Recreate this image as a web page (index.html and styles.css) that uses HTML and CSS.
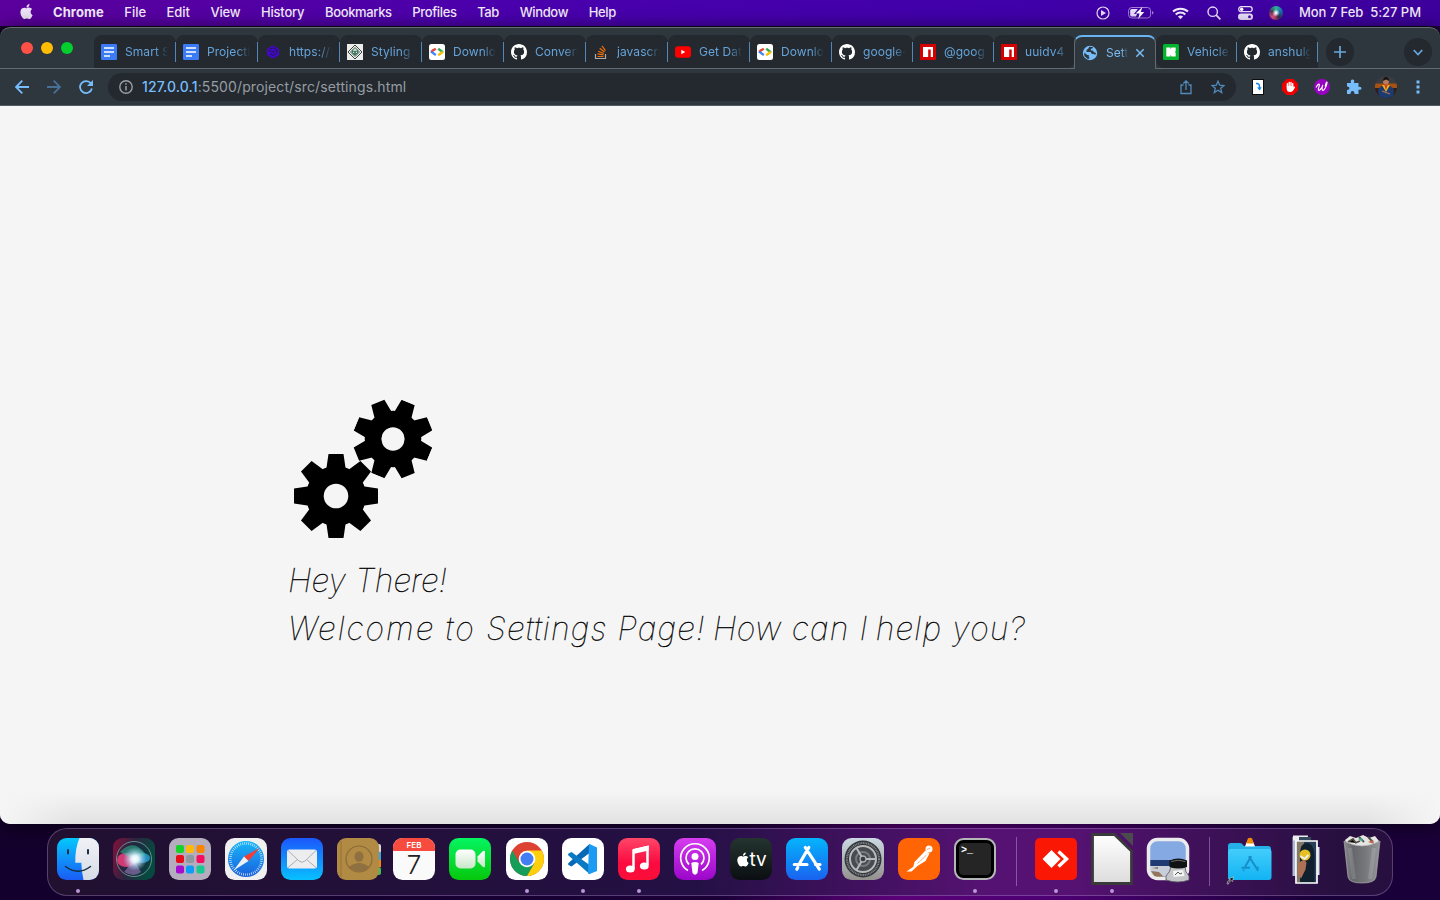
FILE: index.html
```html
<!DOCTYPE html>
<html lang="en">
<head>
<meta charset="utf-8">
<title>Settings</title>
<link rel="stylesheet" href="styles.css">
</head>
<body>
<svg class="defs" width="0" height="0">
  <defs>
    <linearGradient id="gFinder" x1="0" y1="0" x2="0" y2="1"><stop offset="0" stop-color="#04c8fd"/><stop offset="1" stop-color="#1a5cf5"/></linearGradient>
    <linearGradient id="gLight" x1="0" y1="0" x2="0" y2="1"><stop offset="0" stop-color="#f2f2f5"/><stop offset="1" stop-color="#d5dbe6"/></linearGradient>
    <linearGradient id="gMail" x1="0" y1="0" x2="0" y2="1"><stop offset="0" stop-color="#1b57fb"/><stop offset="1" stop-color="#08c0ff"/></linearGradient>
    <linearGradient id="gSafari" x1="0" y1="0" x2="0" y2="1"><stop offset="0" stop-color="#19b7f8"/><stop offset="1" stop-color="#1a5fdd"/></linearGradient>
    <linearGradient id="gWhite" x1="0" y1="0" x2="0" y2="1"><stop offset="0" stop-color="#fff"/><stop offset="1" stop-color="#c9e6c9"/></linearGradient>
    <linearGradient id="gFace" x1="0" y1="0" x2="0" y2="1"><stop offset="0" stop-color="#05f562"/><stop offset="1" stop-color="#06c70c"/></linearGradient>
    <linearGradient id="gMusic" x1="0" y1="0" x2="0" y2="1"><stop offset="0" stop-color="#ff4668"/><stop offset=".6" stop-color="#fb0a40"/><stop offset="1" stop-color="#fa0f38"/></linearGradient>
    <linearGradient id="gPod" x1="0" y1="0" x2="0" y2="1"><stop offset="0" stop-color="#d63df0"/><stop offset="1" stop-color="#9b06c9"/></linearGradient>
    <linearGradient id="gStore" x1="0" y1="0" x2="0" y2="1"><stop offset="0" stop-color="#04b4fc"/><stop offset="1" stop-color="#1a62ef"/></linearGradient>
    <linearGradient id="gPrefs" x1="0" y1="0" x2="0" y2="1"><stop offset="0" stop-color="#cbd9e2"/><stop offset="1" stop-color="#94918f"/></linearGradient>
    <linearGradient id="gPaper" x1="0" y1="0" x2="0" y2="1"><stop offset="0" stop-color="#fff"/><stop offset="1" stop-color="#dcdcdc"/></linearGradient>
    <linearGradient id="gCan" x1="0" y1="0" x2="1" y2="0"><stop offset="0" stop-color="#8b8b8f"/><stop offset=".25" stop-color="#66676b"/><stop offset=".6" stop-color="#77787c"/><stop offset="1" stop-color="#96979b"/></linearGradient>
    <linearGradient id="gFolder" x1="0" y1="0" x2="0" y2="1"><stop offset="0" stop-color="#43cdfb"/><stop offset="1" stop-color="#12b3f3"/></linearGradient>
    <linearGradient id="gSiri" x1="0" y1="0" x2="1" y2=".3"><stop offset="0" stop-color="#86103c"/><stop offset=".5" stop-color="#2c2440"/><stop offset="1" stop-color="#064a3f"/></linearGradient>
    <radialGradient id="gGlow"><stop offset="0" stop-color="#fff"/><stop offset=".3" stop-color="#e8f8ff" stop-opacity=".95"/><stop offset="1" stop-color="#9cf" stop-opacity="0"/></radialGradient>
    <clipPath id="tile"><rect width="42" height="42" rx="9.5"/></clipPath>
  </defs>
  <symbol id="apple" viewBox="0 0 24 24"><path d="M12.152 6.896c-.948 0-2.415-1.078-3.96-1.04-2.04.027-3.91 1.183-4.961 3.014-2.117 3.675-.546 9.103 1.519 12.09 1.013 1.454 2.208 3.09 3.792 3.039 1.52-.065 2.09-.987 3.935-.987 1.831 0 2.35.987 3.96.948 1.637-.026 2.676-1.48 3.676-2.948 1.156-1.688 1.636-3.325 1.662-3.415-.039-.013-3.182-1.221-3.22-4.857-.026-3.04 2.48-4.494 2.597-4.559-1.429-2.09-3.623-2.324-4.39-2.376-2-.156-3.675 1.09-4.61 1.09zM15.53 3.83c.843-1.012 1.4-2.427 1.245-3.83-1.207.052-2.662.805-3.532 1.818-.78.896-1.454 2.338-1.273 3.714 1.338.104 2.715-.688 3.559-1.701"/></symbol>
  <symbol id="docs" viewBox="0 0 16 16"><rect width="16" height="16" rx="1.3" fill="#3b7cf6"/><path d="M3 4h10M3 8h10M3 12h6" stroke="#fff" stroke-width="1.7"/></symbol>
  <symbol id="github" viewBox="0 0 16 16"><path fill="#fff" d="M8 0C3.58 0 0 3.58 0 8c0 3.54 2.29 6.53 5.47 7.59.4.07.55-.17.55-.38 0-.19-.01-.82-.01-1.49-2.01.37-2.53-.49-2.69-.94-.09-.23-.48-.94-.82-1.13-.28-.15-.68-.52-.01-.53.63-.01 1.08.58 1.23.82.72 1.21 1.87.87 2.33.66.07-.52.28-.87.51-1.07-1.78-.2-3.64-.89-3.64-3.95 0-.87.31-1.59.82-2.15-.08-.2-.36-1.02.08-2.12 0 0 .67-.21 2.2.82.64-.18 1.32-.27 2-.27s1.36.09 2 .27c1.53-1.04 2.2-.82 2.2-.82.44 1.1.16 1.92.08 2.12.51.56.82 1.27.82 2.15 0 3.07-1.87 3.75-3.65 3.95.29.25.54.73.54 1.48 0 1.07-.01 1.93-.01 2.2 0 .21.15.46.55.38A8.01 8.01 0 0 0 16 8c0-4.42-3.58-8-8-8z"/></symbol>
  <symbol id="gdev" viewBox="0 0 16 16"><rect width="16" height="16" rx="2.5" fill="#fff"/><g fill="none" stroke-width="2.3"><path d="M6.8 4.7 4.2 6.2" stroke="#ea4335"/><path d="M2 8 4.6 6" stroke="#ea4335"/><path d="M2 7.6 6.8 11" stroke="#4285f4"/><path d="M9.2 4.7 14 8.2" stroke="#34a853"/><path d="M14 7.8 9.2 11.2" stroke="#fbbc04"/></g></symbol>
  <symbol id="npm" viewBox="0 0 16 16"><rect width="16" height="16" fill="#d50000"/><path d="M3 3h10v10h-2.3V5.6H8.2V13H3z" fill="#fff"/></symbol>
  <symbol id="store" viewBox="0 0 42 42"><g fill="none" stroke="#fff" stroke-width="3.2" stroke-linecap="round"><path d="M22.8 9.5 13.7 25.3M19.3 9.5 33.3 31.2M8.3 26.5H21M29.5 26.5H34M11.8 29.4 10.8 31.2"/></g></symbol>
  <symbol id="gear" viewBox="-42 -42 84 84"><path fill-rule="evenodd" d="M-30 0a30 30 0 1 0 60 0a30 30 0 1 0-60 0zM-12.300 0a12.300 12.300 0 1 1 24.600 0a12.300 12.300 0 1 1-24.600 0z"/><path id="teeth" d="M-7.500-42h15L9.700-27H-9.700zM-7.500 42h15L9.700 27H-9.700zM-42-7.500v15L-27 9.700V-9.700zM42-7.500v15L27 9.700V-9.700z"/><use href="#teeth" transform="rotate(45)"/></symbol>
</svg>

<header class="menubar">
  <svg class="apple-logo"><use href="#apple"/></svg>
  <nav class="menus"><b>Chrome</b><span>File</span><span>Edit</span><span>View</span><span>History</span><span>Bookmarks</span><span>Profiles</span><span>Tab</span><span>Window</span><span>Help</span></nav>
  <div class="status">
    <svg width="14" height="14" viewBox="0 0 14 14"><circle cx="7" cy="7" r="6" fill="none" stroke="#e9defa" stroke-width="1.2"/><path d="M5 4v6l5-3z" fill="#e9defa"/></svg>
    <svg class="battery" width="26" height="14" viewBox="0 0 26 14"><rect x=".6" y="1.5" width="22" height="10.5" rx="3.2" fill="none" stroke="#a77fd8"/><path d="M24 5v3.5q1.5-.4 1.5-1.7T24 5" fill="#a77fd8"/><path d="M3.800 3h6L6 8h3l-1 2.500H3.800q-1.600 0-1.600-1.500V4.500q0-1.500 1.600-1.500z" fill="#e9defa"/><path d="m14.500 1-7 6.500h4l-1.300 5.500 6-7h-3.500z" fill="#fff"/></svg>
    <svg class="wifi" width="17" height="13" viewBox="0 0 17 13"><g fill="none" stroke="#f3ecfc" stroke-width="2"><path d="M1 4.600a11 11 0 0 1 15 0M3.700 7.500a7 7 0 0 1 9.600 0"/></g><path d="M5.900 9.600a4 4 0 0 1 5.200 0L8.500 12.300z" fill="#f3ecfc"/></svg>
    <svg class="search" width="14" height="14" viewBox="0 0 14 14"><g fill="none" stroke="#e9defa" stroke-width="1.400"><circle cx="5.700" cy="5.700" r="4.700"/><path d="m9.200 9.200 4.200 4.200" stroke-width="1.800"/></g></svg>
    <svg class="control" width="15" height="14" viewBox="0 0 15 14"><rect x=".7" y=".7" width="13.500" height="5" rx="2.500" fill="none" stroke="#e9defa" stroke-width="1.300"/><circle cx="3.700" cy="3.200" r="1.700" fill="#fff"/><rect y="7.500" width="15" height="6.500" rx="3.200" fill="#e9defa"/><circle cx="11.500" cy="10.700" r="1.500" fill="#4a10a8"/></svg>
    <i class="siri-mini"></i>
    <span class="clock">Mon 7 Feb&nbsp; 5:27 PM</span>
  </div>
</header>

<section class="window">
  <div class="tabstrip">
    <div class="lights"><i class="red"></i><i class="yellow"></i><i class="green"></i></div>
    <div class="tabs">
      <div class="tab"><svg><use href="#docs"/></svg><span>Smart S</span></div>
      <div class="tab"><svg><use href="#docs"/></svg><span>ProjectI</span></div>
      <div class="tab"><svg viewBox="0 0 16 16"><path d="m8 1.500 6 3.300v6.400l-6 3.300-6-3.300V4.800z" fill="#4108c8"/><path d="M4.200 7.500V5.800L8 3.700l3.800 2.100v3L8 11.500 5 9.700M6 7l2 1.200L10 7" fill="none" stroke="#1f1b3c"/></svg><span>https://l</span></div>
      <div class="tab"><svg viewBox="0 0 16 16"><rect width="16" height="16" fill="#ececec"/><path d="m8 1 7 7-7 7-7-7z" fill="#e9ece9" stroke="#3c4443"/><path d="m8 3.500 4.500 4.500L8 12.500 3.500 8z" fill="#c4d3ca" stroke="#26483c" stroke-width=".8"/><path d="M5 5.500 6.700 7h2.600L11 5.500V9l-3 2.500L5 9z" fill="#3d745b"/><path d="M6 8.300h1.200M8.800 8.300H10" stroke="#fff"/></svg><span>Styling</span></div>
      <div class="tab"><svg><use href="#gdev"/></svg><span>Downlo</span></div>
      <div class="tab"><svg><use href="#github"/></svg><span>Convert</span></div>
      <div class="tab"><svg viewBox="0 0 16 16"><path d="M2.500 10v4.500h10V10" fill="none" stroke="#a9adb0" stroke-width="1.200"/><path d="M4.500 12.500h6M4.600 9.900l6 1M5.200 7.200l5.600 2.300M6.700 4.300l4.800 3.700M9 1.800l3.400 4.800" stroke="#f0700a" stroke-width="1.200"/></svg><span>javascri</span></div>
      <div class="tab"><svg viewBox="0 0 16 16"><rect y="2.300" width="16" height="11.400" rx="3" fill="#f00"/><path d="M6.300 5.700v4.600l4-2.300z" fill="#fff"/></svg><span>Get Dat</span></div>
      <div class="tab"><svg><use href="#gdev"/></svg><span>Downlo</span></div>
      <div class="tab narrow"><svg><use href="#github"/></svg><span>google-</span></div>
      <div class="tab narrow"><svg><use href="#npm"/></svg><span>@goog</span></div>
      <div class="tab narrow before"><svg><use href="#npm"/></svg><span>uuidv4</span></div>
      <div class="tab narrow active"><svg viewBox="0 0 16 16"><circle cx="8" cy="8" r="7.200" fill="#77bdfb"/><path d="M2.300 7.500 5.200 10h1.600v1.800l1 1.400-2 .8-3.500-3zM7.200 1.800l-.8 1.700L4.500 5v2h4.200l1.200 2h2l1.200 1 1-2-2.500-1L11 5.500H8.700L9 3.800l1.800-.6V2z" fill="#2f373e"/></svg><span>Sett</span><svg class="close" viewBox="0 0 10 10"><path d="m1.300 1.300 7.400 7.400m0-7.400-7.400 7.400"/></svg></div>
      <div class="tab narrow after"><svg viewBox="0 0 16 16"><rect width="16" height="16" rx="1.500" fill="#03b52c"/><path d="M3.300 3.500h4.200v2l1-2h4.200v3.700l-1 .8 1 .8v3.700H8.500l-1-2v2H3.300z" fill="#fff"/></svg><span>Vehicle</span></div>
      <div class="tab narrow"><svg><use href="#github"/></svg><span>anshulg</span></div>
    </div>
    <button class="round plus"><svg width="12" height="12" viewBox="0 0 12 12"><path d="M6 0v12M0 6h12"/></svg></button>
    <button class="round chevron"><svg width="10" height="7" viewBox="0 0 10 7"><path d="m.7 1 4.300 4.500L9.300 1"/></svg></button>
  </div>
  <div class="toolbar">
    <svg class="nav" viewBox="0 0 14 14"><path d="M14 7H1.500M7.300.7 1 7l6.300 6.300"/></svg>
    <svg class="nav dim" viewBox="0 0 14 14"><path d="M0 7h12.500M6.700.7 13 7l-6.300 6.300"/></svg>
    <svg class="nav" viewBox="0 0 14 14"><path d="M12 3.600A6 6 0 1 0 12.900 8.500"/><path d="M14 0v6H8z" class="solid"/></svg>
    <div class="address">
      <svg width="14" height="14" viewBox="0 0 14 14"><circle cx="7" cy="7" r="6.200" fill="none" stroke="#9aa0a4" stroke-width="1.400"/><path d="M7 3.200v1.600M7 6v4.600" stroke="#9aa0a4" stroke-width="1.500"/></svg>
      <span class="url"><b>127.0.0.1</b>:5500/project/src/settings.html</span>
      <svg class="share" width="12" height="15" viewBox="0 0 12 15"><path d="M3.500 5H1v8.500h10V5H8.500M6 10V1M3.300 3.500 6 .9l2.700 2.600"/></svg>
      <svg class="star" width="14" height="14" viewBox="0 0 14 14"><path d="m7 1.200 1.700 4 4.300.3-3.300 2.800 1 4.200L7 10.200l-3.700 2.300 1-4.200L1 5.500l4.300-.3z"/></svg>
    </div>
    <div class="extensions">
      <svg viewBox="0 0 18 18"><rect x="3.500" y="1.500" width="11" height="15" fill="#fff" stroke="#0b0d0f"/><path d="M7 5.500q4-.5 3.500 4.500" fill="none" stroke="#1683e5" stroke-width="1.600"/><path d="m8 9.500 2.700 3 2-3.300z" fill="#1683e5"/></svg>
      <svg viewBox="0 0 18 18"><path d="M5.700 1h6.600L17 5.700v6.600L12.300 17H5.700L1 12.300V5.700z" fill="#f20000"/><g stroke="#fff" stroke-width="1.400" stroke-linecap="round"><path d="M6.400 9V5.800M8.200 9V4.400M10 9V4.400M11.700 9V5.600M13.300 9.300 11.500 12"/></g><path d="M5.700 8h6.700v3q-.3 3-3.300 3-3.400 0-3.400-3.500z" fill="#fff"/></svg>
      <svg viewBox="0 0 18 18"><circle cx="9" cy="9" r="8" fill="#9803c2"/><path d="M3 9.500Q5.500 5 6.500 6.500 6 9 5.300 11q0 2.500 2 .5T9.800 7q-1.200 3.500-.6 5 1.300 1.500 3.300-2.500 2-4.500 1.400-5.500-1 0-1.700 4.500" fill="none" stroke="#fff" stroke-width="1.100"/></svg>
      <svg viewBox="0 0 18 18"><path d="M2 5h4q-1-3.500 1.500-3.500T9 5h4.500v4q3-.8 3 1.300t-3 1.300V16h-4q0-3-2-3t-2 3H2v-4q2.500 0 2.500-1.800T2 8.500z" fill="#77bdfb"/></svg>
      <svg class="avatar" viewBox="0 0 22 22"><defs><clipPath id="face"><circle cx="11" cy="11" r="11"/></clipPath></defs><g clip-path="url(#face)"><path fill="#3d3b42" d="M0 0h22v22H0z"/><path d="M0 7.500h22v5H0z" fill="#a9510f"/><path d="M0 12h22v10H0z" fill="#2e1e18"/><path d="m4 22-1-9 5-4h6l5 4-1 9z" fill="#1d3b6e"/><path d="m7 9 4 7 4-7z" fill="#f0b51b"/><path d="m9 8 2 6 2-6z" fill="#c94226"/><circle cx="11" cy="5.500" r="3" fill="#b97d5c"/><path d="M8 5q0-4 3-4t3 4l-3-1.500z" fill="#141414"/><path d="m7 15 8 3" stroke="#a9745b" stroke-width="1.300"/></g></svg>
      <svg class="kebab" viewBox="0 0 4 14"><path d="M.5.500h3v3h-3zM.5 5.500h3v3h-3zM.5 10.500h3v3h-3z" fill="#77bdfb"/></svg>
    </div>
  </div>
  <main class="page">
    <svg class="gears" viewBox="0 0 144 144"><use href="#gear" x="6" y="57" width="84" height="84"/><g transform="rotate(22.500 105 42)"><use href="#gear" x="65.400" y="2.400" width="79.200" height="79.200"/></g></svg>
    <p class="line hey">Hey There!</p>
    <p class="line welcome"><span class="wider">Welcome</span> <span class="widest">to</span> Settings <span class="pull">Page!</span> <span class="tight">How</span> can <span class="pull">I</span> help you?</p>
  </main>
</section>

<footer class="dock">
  <div class="app on"><svg viewBox="0 0 42 42"><g clip-path="url(#tile)"><path fill="url(#gFinder)" d="M0 0h42v42H0z"/><path d="M22.500 0H42v42H26.500Q24.500 33 24.300 24.800h-6Q18 10 22.500 0z" fill="url(#gLight)"/></g><path d="M11 12v3.500M31 12v3.500" stroke="#153046" stroke-width="2" stroke-linecap="round"/><path d="M8.500 28.500q12.500 9.500 25 0" fill="none" stroke="#162c3c" stroke-width="1.500" stroke-linecap="round"/></svg></div>
  <div class="app"><svg viewBox="0 0 42 42"><g clip-path="url(#tile)"><path fill="url(#gSiri)" d="M0 0h42v42H0z"/></g><circle cx="21" cy="21" r="17.500" fill="#0c2d43" fill-opacity=".35" stroke="#8ec4b5" stroke-opacity=".65"/><ellipse cx="13" cy="22" rx="9" ry="7" fill="#fa4080" opacity=".8"/><ellipse cx="29" cy="20" rx="8" ry="5" fill="#2eaae6" opacity=".75"/><path d="M7 14q14-15 26 3l-12 5z" fill="#2cae8a" opacity=".6"/><path d="M21 22 11 34q10 6 17 0z" fill="#b886cf" opacity=".5"/><circle cx="22" cy="21" r="12" fill="url(#gGlow)"/></svg></div>
  <div class="app"><svg viewBox="0 0 42 42"><rect width="42" height="42" rx="9.500" fill="#b4adbd"/><rect x="7" y="7" width="8" height="8" rx="2" fill="#15d329"/><rect x="17" y="7" width="8" height="8" rx="2" fill="#fcba0b"/><rect x="27.500" y="7" width="8" height="8" rx="2" fill="#fb8500"/><rect x="7" y="17" width="8" height="8" rx="2" fill="#e80b18"/><rect x="17" y="17" width="8" height="8" rx="2" fill="#8f989e"/><rect x="27.500" y="17" width="8" height="8" rx="2" fill="#f80d5e"/><rect x="7" y="27.500" width="8" height="8" rx="2" fill="#a60ccf"/><rect x="17" y="27.500" width="8" height="8" rx="2" fill="#0b9cf8"/><rect x="27.500" y="27.500" width="8" height="8" rx="2" fill="#16c992"/></svg></div>
  <div class="app"><svg viewBox="0 0 42 42"><rect width="42" height="42" rx="9.500" fill="#f0f0f0"/><circle cx="21" cy="21" r="18" fill="url(#gSafari)"/><circle cx="21" cy="21" r="15.600" fill="none" stroke="#d9efff" stroke-width="2.500" stroke-dasharray=".7 1.340"/><path d="m34.500 10-15.500 8.500 4.500 4.500z" fill="#f73c33"/><path d="m8.500 32.500 10.500-14 4.500 4.500z" fill="#eef1f5"/></svg></div>
  <div class="app"><svg viewBox="0 0 42 42"><rect width="42" height="42" rx="9.500" fill="url(#gMail)"/><rect x="6" y="11.500" width="30" height="19" rx="2.500" fill="#ededf0"/><path d="m7 12.500 11 10.500q3 2.500 6 0l11-10.500M7 29.500l9.500-8M35 29.500l-9.500-8" fill="none" stroke="#a9aeb5"/></svg></div>
  <div class="app"><svg viewBox="0 0 42 42"><rect x="34" y="6" width="10" height="9" rx="2" fill="#d8d8d8"/><path d="M38 14h6v8h-6z" fill="#34aadc"/><path d="M38 22h6v7h-6z" fill="#ef8519"/><rect x="34" y="29" width="10" height="8" rx="2" fill="#38c15b"/><rect width="42" height="42" rx="9" fill="#b18a44"/><path d="M4 3v36" stroke="#957236"/><g fill="none" stroke="#8b6b38" stroke-width="1.200"><circle cx="22" cy="21" r="13"/></g><ellipse cx="22" cy="18.500" rx="4.500" ry="5.200" fill="#8f7041"/><path d="M12 29q10-8 20 0-9 9-20 0" fill="#8f7041"/></svg></div>
  <div class="app"><div class="calendar"><small>FEB</small><span>7</span></div></div>
  <div class="app"><svg viewBox="0 0 42 42"><rect width="42" height="42" rx="9.500" fill="url(#gFace)"/><rect x="6.500" y="11.500" width="20" height="19" rx="5" fill="url(#gWhite)"/><path d="M28.500 18.500 34 13q2-1 2 1v14q0 2-2 1l-5.500-5.500z" fill="url(#gWhite)"/></svg></div>
  <div class="app on shift"><svg viewBox="0 0 42 42"><rect width="42" height="42" rx="9.500" fill="#fff"/><circle cx="21" cy="21" r="17" fill="#dc4132"/><path d="M6.300 12.500A17 17 0 0 0 21 38l7.400-12.700H21L13.600 25.300z" fill="#159e5a"/><path d="M35.700 12.500A17 17 0 0 1 21 38l7.400-12.700L21 12.500z" fill="#fecf0b"/><circle cx="21" cy="21" r="8.300" fill="#fff"/><circle cx="21" cy="21" r="6.500" fill="#427df3"/></svg></div>
  <div class="app on"><svg viewBox="0 0 42 42"><rect width="42" height="42" rx="9.500" fill="#fff"/><path d="M27.500 6v9L9.500 28.500 6.500 27q-1-1 0-2z" fill="#0769b5"/><path d="M27.500 36v-9L9.500 14 6.500 15.500q-1 1 0 2z" fill="#0b7ac4"/><path d="M27 5.800 35 9.500v23.500L27 36.300l-1-1z" fill="#1b9cf2"/></svg></div>
  <div class="app on"><svg viewBox="0 0 42 42"><rect width="42" height="42" rx="9.500" fill="url(#gMusic)"/><path d="M15.500 31V12.500L29.500 9v18" fill="none" stroke="#fff" stroke-width="2.500"/><path d="M15 11 30.700 7.500v5L15 16z" fill="#fff"/><ellipse cx="12.300" cy="31" rx="4.400" ry="3.500" fill="#fff"/><ellipse cx="26.300" cy="28" rx="4.400" ry="3.500" fill="#fff"/></svg></div>
  <div class="app"><svg viewBox="0 0 42 42"><rect width="42" height="42" rx="9.500" fill="url(#gPod)"/><g fill="none" stroke="#fff" stroke-width="1.700"><path d="M14 32.500a14.300 14.300 0 1 1 14 0M15 26.500a9 9 0 1 1 12 0"/></g><circle cx="21" cy="18.500" r="3.500" fill="#fff"/><path d="M17.300 25q3.700-2 7.400 0l-1.200 10q-2.500 3.500-5 0z" fill="#fff"/></svg></div>
  <div class="app"><div class="tv"><svg><use href="#apple"/></svg><span>tv</span></div></div>
  <div class="app"><svg viewBox="0 0 42 42"><rect width="42" height="42" rx="9.500" fill="url(#gStore)"/><use href="#store" width="42" height="42"/></svg></div>
  <div class="app"><svg viewBox="0 0 42 42"><rect width="42" height="42" rx="9.500" fill="url(#gPrefs)"/><circle cx="21" cy="21" r="18.500" fill="#33363a"/><circle cx="21" cy="21" r="16" fill="none" stroke="#85898c" stroke-width="2" stroke-dasharray="1 .700"/><circle cx="21" cy="21" r="13" fill="#484b4f" stroke="#b8babc" stroke-width="2"/><circle cx="21" cy="21" r="7" fill="none" stroke="#777b7f" stroke-width="2"/><circle cx="21" cy="21" r="3" fill="#3a3d40" stroke="#aeb1b3" stroke-width="1.300"/><path d="M24 21h10M19.500 18.500 14.500 10M19.500 23.500 14.500 32" stroke="#b8babc" stroke-width="2"/></svg></div>
  <div class="app"><svg viewBox="0 0 42 42"><rect width="42" height="42" rx="9.500" fill="#ff6504"/><circle cx="31" cy="11" r="3.500" fill="#fff"/><path d="M27.500 12.500 16.500 24l-1.200 4.700L8.500 33.500h5l6-5.500 8-5 4-7.500z" fill="#fff"/><path d="m28.500 17-9 8.500M29 11.500l3.500-1.500" stroke="#ff8a42" stroke-width=".7"/></svg></div>
  <div class="app on"><div class="terminal">&gt;_</div></div>
  <i class="divider first"></i>
  <div class="app on"><svg viewBox="0 0 42 42"><rect width="42" height="42" rx="5" fill="#fa1805"/><path d="m16.500 12 9 9-9 9-9-9z" fill="#fff"/><path d="m23.500 13.500 8 7.500-8 7.500" fill="none" stroke="#fff" stroke-width="3.500"/></svg></div>
  <div class="app on"><svg class="tall" viewBox="0 0 42 52"><path d="M29 0h13v13z" fill="#4b4a4c"/><path d="M1.500 1.500h22L40.500 18v32.500h-39z" fill="url(#gPaper)" stroke="#3a3a3a" stroke-width="2.800"/></svg></div>
  <div class="app"><svg viewBox="0 0 42 42"><rect x="1.500" y="1.500" width="39" height="39" rx="9" fill="#85a9e2"/><path d="M3 22h36v7H3z" fill="#203b73"/><path d="M3 28h36v10H3z" fill="#c8cfdb"/><path d="m4 33 8 1 5 5H8zM5 30l6-1v2z" fill="#95755c"/><rect x="1.500" y="1.500" width="39" height="39" rx="9" fill="none" stroke="#ececec" stroke-width="3.500"/><path d="M24 29h14q0 5 4 9v4q-11 4-23 0v-4q4-4 5-9z" fill="#c3c5c8" stroke="#55585c" stroke-width=".8"/><path d="M22.500 22.500q9-4 17.500 0v6.500q-9 3-17.500 0z" fill="#0f1113"/><path d="M24 23.500q7-2.500 14.500 0" stroke="#66696b" fill="none"/><path d="m26 33 10-1 1.500 6-11 1z" fill="#f3f3f3"/><path d="m28 37 3-3 2 2 2-1" stroke="#555" fill="none"/></svg></div>
  <i class="divider"></i>
  <div class="app"><svg class="folder" viewBox="0 0 46 48"><path d="M1 10q0-3 3-3h9q2 0 3 2l1 1h24q3 0 3 3v28q0 3-3 3H4q-3 0-3-3z" fill="#25afe8"/><path d="M20.300 4.500h5.400L28 10.500H18z" fill="#fff"/><path d="M20.800 2.500q2.200-1.500 4.400 0l1.300 5h-7z" fill="#f48a00"/><rect x="1" y="13" width="43.500" height="31" rx="3" fill="url(#gFolder)"/><svg x="9" y="14" width="28" height="28" viewBox="0 0 42 42"><path d="M22.800 9.500 13.700 25.300M19.300 9.500 33.300 31.200M8.300 26.500H21M29.500 26.500H34M11.800 29.400l-1 1.800" stroke="#168fc9" stroke-width="3" fill="none"/></svg></svg><svg class="alias" viewBox="0 0 8 8"><path d="M1 8q0-4 3.500-4L3 2.500 7.500 1 6.500 5.500 5.300 4.500Q2.500 5.500 2.500 8z" fill="#111" stroke="#ddd" stroke-width=".6"/></svg></div>
  <div class="app"><svg class="tall photos" viewBox="0 0 30 50"><path d="M1.500 3h18v39h-18z" fill="#aebad6"/><path d="M2 1.500h15v5H2z" fill="#eee"/><path d="M8 3h12v5H8z" fill="#34495c"/><path d="M20 13h8.500v28H20z" fill="#dbe2ee"/><path d="M22 15h5v24h-5z" fill="#9aa9c4"/><path d="M5 7h21v42H5z" fill="#26405a" stroke="#fff" stroke-width="1.700"/><path d="M6 8h7v40H6z" fill="#847867"/><path d="M9 48V20q0-11 7-11 6 0 7.500 11v28z" fill="#10202f"/><circle cx="14" cy="21" r="5.500" fill="#e6bf22"/><path d="m9.500 22 4 3 4-4" stroke="#eee" stroke-width="2" fill="none"/><path d="m7 29 6-3.500 2.500 3-1 7-4.500 9-3-4z" fill="#ad7155"/></svg></div>
  <div class="app"><svg class="tall trash" viewBox="0 0 38 50"><path d="m2 6 5-4 6 2 7-3 6 3 6-2 4 5-4 6H5z" fill="#e5e5e3"/><path d="m5 8 5-3 3 4M16 3l5 5M25 3l5 5M12 9l5-2" stroke="#514a46" stroke-width="1.800"/><path d="m15 5 4-1 1 4z" fill="#49a98e"/><path d="m25 8 5-2 1 4z" fill="#bd674c"/><path d="M1 7q18 10 36 0l-4 36q-1 6-14 6T5 43z" fill="url(#gCan)" stroke="#aaa" stroke-width=".7"/><path d="M7 14l4 31M31 14l-4 31" stroke="#fff" stroke-opacity=".13" stroke-width="4"/></svg></div>
</footer>
</body>
</html>
```
FILE: styles.css
```css
* { box-sizing: border-box; }
body {
  margin: 0; width: 1440px; height: 900px; overflow: hidden;
  display: flex; flex-direction: column;
  font-family: Inter, "Liberation Sans", sans-serif;
  background: linear-gradient(100deg, #14002c 0 25%, #1b0038 55%, #5b0078 66%, #4a0070 77%, #1a0038 92%);
}
.defs { position: absolute; }
svg { flex: none; display: block; }

.menubar {
  height: 26px; flex: none; display: flex; align-items: center;
  padding: 0 19px; color: #f1eafa; font-size: 13px; font-weight: 500;
  background: linear-gradient(90deg, #5b009c, #4a00ad 35%, #4000aa 70%, #3d009c);
}
.apple-logo { width: 15px; height: 17px; fill: #ece2f5; margin-bottom: 3px; }
.menus { display: flex; margin: 0 0 3px 19px; gap: 20.600px; letter-spacing: -.06px; }
.menus b { letter-spacing: .08px; }
.menus span:nth-child(n+4) { letter-spacing: -.2px; }
.menus span:nth-child(n+6) { letter-spacing: -.360px; }
.status { display: flex; align-items: center; margin-left: auto; height: 24px; }
.battery { margin-left: 18px; }
.wifi { margin-left: 18px; }
.search { margin-left: 18px; }
.control { margin-left: 17px; }
.siri-mini { width: 14px; height: 14px; border-radius: 50%; margin-left: 16px; background: radial-gradient(circle, #fff 5%, transparent 38%), conic-gradient(#2bb89b, #176caf, #30314e, #ed4f7e, #4b3657, #2bb89b); }
.clock { margin: 0 0 3px 16px; letter-spacing: -.04px; }

.window {
  height: 798px; flex: none; display: flex; flex-direction: column;
  border-radius: 10px; overflow: hidden; background: #2f373e;
  border-top: 1px solid #0b0613; box-shadow: 0 2px 18px rgba(0,0,0,.6);
}
.tabstrip {
  height: 42px; flex: none; display: flex; align-items: flex-end;
  border-top: 1px solid #666c75; border-radius: 10px 10px 0 0;
  box-shadow: inset 0 -1px #646b70;
}
.lights { width: 94px; height: 100%; padding: 14px 0 0 21px; display: flex; gap: 8px; }
.lights i { width: 12px; height: 12px; border-radius: 50%; }
.red { background: #ff5047; }
.yellow { background: #ffbd03; }
.green { background: #00cf2d; }
.tabs { display: flex; height: 34px; padding-bottom: 1px; }
.tab {
  width: 82px; height: 33px; display: flex; align-items: center; gap: 8px;
  padding-left: 7px; border-radius: 8px 8px 0 0; background: #23292f; position: relative;
}
.tab::after { content: ""; position: absolute; right: 0; top: 7px; width: 1px; height: 20px; background: #5288b8; }
.narrow { width: 81px; }
.before::after, .active::after { display: none; }
.before { border-radius: 8px 8px 8px 0; }
.after { border-radius: 8px 8px 0 8px; }
.tab svg { width: 16px; height: 16px; }
.tab span {
  width: 43px; white-space: nowrap; color: #66a3d8;
  font-size: 12px; letter-spacing: .06px; line-height: 18px;
  -webkit-mask-image: linear-gradient(90deg, #000 70%, transparent 100%);
}
.active { height: 34px; padding-left: 7px; margin-left: -1px; width: 82px; background: #2f373e; border: 1px solid #646b70; border-top: 2px solid #69b5f4; border-bottom: 0; }
.active svg { margin-bottom: 1px; }
.active span { width: 22px; color: #7abdf3; margin-bottom: 1px; }
.active .close { width: 10px; height: 10px; margin-left: -1px; stroke: #7abdf3; stroke-width: 1.500; fill: none; }
.round { width: 28px; height: 28px; padding: 0; border: 0; border-radius: 50%; background: #23292f; display: flex; align-items: center; justify-content: center; margin-bottom: 3px; }
.round path { stroke: #69a8dc; stroke-width: 1.700; fill: none; }
.plus { margin-left: 8px; }
.chevron { margin-left: auto; margin-right: 8px; }

.toolbar { height: 37px; flex: none; display: flex; align-items: center; padding-left: 15px; border-bottom: 1px solid #535c64; }
.nav { width: 14px; height: 14px; margin-right: 18px; fill: none; stroke: #77bdfb; stroke-width: 1.800; }
.nav .solid { fill: #77bdfb; stroke: none; }
.dim { stroke: #477096; }
.address { width: 1128px; height: 28px; margin-left: -3px; border-radius: 14px; background: #23292f; display: flex; align-items: center; padding: 0 11px; }
.url { font-size: 14px; color: #969da2; margin: 0 0 2px 9px; letter-spacing: .12px; }
.url b { color: #77bdfb; font-weight: 500; }
.share, .star { fill: none; stroke: #518abb; stroke-width: 1.300; }
.share { margin-left: auto; }
.star { margin-left: 19px; }
.extensions { display: flex; align-items: center; gap: 14px; margin-left: 13px; }
.extensions svg { width: 18px; height: 18px; }
.extensions .avatar { width: 22px; height: 22px; margin: 0 -2px; }
.extensions .kebab { width: 4px; height: 14px; margin-left: 7px; }

.page {
  flex: 1; padding: 291px 0 0 288px; color: #000;
  background: linear-gradient(90deg, #f5f5f5, transparent 5% 95%, #f5f5f5), linear-gradient(transparent 685px, rgba(0,0,0,.08)), #f5f5f5;
}
.gears { width: 144px; height: 144px; }
.line { margin: 0; height: 48px; line-height: 48px; font-size: 32px; font-style: italic; font-weight: 100; white-space: nowrap; font-feature-settings: "cv11"; -webkit-text-stroke: .300px #000; }
.hey { margin-top: 16px; }
.welcome { letter-spacing: 1.120px; }
.wider { letter-spacing: 1.960px; }
.widest { letter-spacing: 2.300px; }
.tight { letter-spacing: .420px; }
.pull { margin-right: -3px; }

.dock {
  width: 1346px; height: 68px; flex: none; margin: 4px auto 0 47px;
  display: flex; padding: 0 2px; border: 1px solid rgba(190,150,220,.35); border-radius: 20px;
  background: linear-gradient(90deg, #21102f, #241044 48%, #561273 70%, #561273 76%, #27103f 96%);
}
.app { width: 56px; height: 66px; padding-top: 9px; display: flex; justify-content: center; position: relative; }
.app > svg { width: 42px; height: 42px; overflow: visible; }
.shift { margin-left: 1px; }
.on::after { content: ""; position: absolute; width: 4px; height: 4px; border-radius: 50%; background: #b996d8; left: 26px; top: 60px; }
.divider { width: 1px; height: 49px; margin: 8px 12px 0 13px; background: rgba(205,165,225,.45); }
.first { margin-right: 11px; }
.calendar { width: 42px; height: 42px; border-radius: 9.500px; overflow: hidden; background: #fafafa; text-align: center; display: flex; flex-direction: column; }
.calendar small { height: 13px; line-height: 14px; background: #f74b40; color: #fff; font-size: 8px; font-weight: 600; }
.calendar span { font-size: 26px; line-height: 27px; font-weight: 300; color: #222; }
.tv { width: 42px; height: 42px; border-radius: 9.500px; background: linear-gradient(#24342f, #0b0e12); color: #fff; display: flex; align-items: center; justify-content: center; font-size: 19px; letter-spacing: -.2px; }
.tv svg { width: 14px; height: 15px; fill: #fff; }
.terminal { width: 42px; height: 42px; border: 2px solid #b4b7b8; border-radius: 9.500px; background: #252525; box-shadow: inset 0 0 0 3px #000; color: #fff; font: bold 10px/12px "Liberation Mono", monospace; padding: 5px; }
.app > .tall { height: 52px; margin-top: -5px; }
.app > .photos { width: 30px; height: 50px; margin-top: -4px; }
.app > .trash { width: 38px; height: 50px; margin-top: -4px; }
.app > .folder { width: 46px; height: 48px; margin-top: -2px; }
.app > .alias { position: absolute; width: 8px; height: 8px; left: 4px; top: 47px; }
```
